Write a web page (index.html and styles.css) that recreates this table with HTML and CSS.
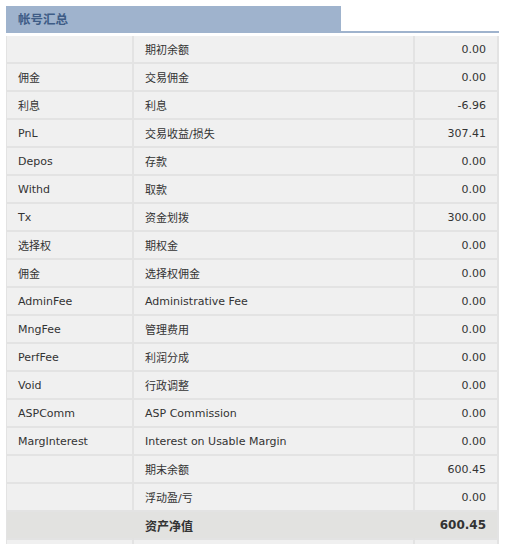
FILE: index.html
```html
<!DOCTYPE html>
<html>
<head>
<meta charset="utf-8">
<link rel="stylesheet" href="styles.css">
</head>
<body>
<div class="panel">
  <div class="tabbar"><div class="tab">帐号汇总</div></div>
  <table class="summary">
    <colgroup><col class="c1"><col class="c2"><col class="c3"></colgroup>
    <tr><td></td><td>期初余额</td><td class="num">0.00</td></tr>
    <tr><td>佣金</td><td>交易佣金</td><td class="num">0.00</td></tr>
    <tr><td>利息</td><td>利息</td><td class="num">-6.96</td></tr>
    <tr><td>PnL</td><td>交易收益/损失</td><td class="num">307.41</td></tr>
    <tr><td>Depos</td><td>存款</td><td class="num">0.00</td></tr>
    <tr><td>Withd</td><td>取款</td><td class="num">0.00</td></tr>
    <tr><td>Tx</td><td>资金划拨</td><td class="num">300.00</td></tr>
    <tr><td>选择权</td><td>期权金</td><td class="num">0.00</td></tr>
    <tr><td>佣金</td><td>选择权佣金</td><td class="num">0.00</td></tr>
    <tr><td>AdminFee</td><td>Administrative Fee</td><td class="num">0.00</td></tr>
    <tr><td>MngFee</td><td>管理费用</td><td class="num">0.00</td></tr>
    <tr><td>PerfFee</td><td>利润分成</td><td class="num">0.00</td></tr>
    <tr><td>Void</td><td>行政调整</td><td class="num">0.00</td></tr>
    <tr><td>ASPComm</td><td>ASP Commission</td><td class="num">0.00</td></tr>
    <tr><td>MargInterest</td><td>Interest on Usable Margin</td><td class="num">0.00</td></tr>
    <tr><td></td><td>期末余额</td><td class="num">600.45</td></tr>
    <tr><td></td><td>浮动盈/亏</td><td class="num">0.00</td></tr>
    <tr class="total"><td></td><td>资产净值</td><td class="num">600.45</td></tr>
    <tr><td></td><td></td><td class="num"></td></tr>
  </table>
</div>
</body>
</html>
```

FILE: styles.css
```css
html, body {
  margin: 0;
  padding: 0;
  background: #ffffff;
}
body {
  padding: 6px 0 0 6px;
  font-family: "DejaVu Sans", Verdana, "Noto Sans CJK SC", sans-serif;
  font-size: 11px;
  color: #333333;
}
.panel {
  width: 493px;
}
.tabbar {
  border-bottom: 2px solid #9fb3cd;
  display: flex;
}
.tab {
  width: 335px;
  height: 25px;
  background: #9fb3cd;
  color: #3e5c86;
  font-family: "Noto Sans CJK SC", sans-serif;
  font-weight: bold;
  font-size: 12.5px;
  line-height: 25px;
  padding-left: 12px;
  box-sizing: border-box;
}
.summary {
  margin-top: 3px;
  width: 493px;
  border-collapse: separate;
  border-spacing: 0;
  table-layout: fixed;
}
.c1 { width: 128px; }
.c2 { width: 281px; }
.c3 { width: 84px; }
.summary td {
  background: #f0f0f0;
  height: 28px;
  padding: 0 11px;
  border-right: 2px solid #e3e3e3;
  border-bottom: 2px solid #e3e3e3;
  font-family: "DejaVu Sans", "Noto Sans CJK SC", sans-serif;
  font-size: 11px;
  white-space: nowrap;
  overflow: hidden;
  box-sizing: border-box;
  vertical-align: middle;
}
.summary td:first-child {
  border-left: 1px solid #e3e3e3;
}
.summary td.num {
  text-align: right;
}
.summary tr.total td {
  background: #e2e2e0;
  border-right-color: #e2e2e0;
  font-weight: bold;
  font-size: 12px;
}
.summary tr.total td:last-child {
  border-right-color: #e3e3e3;
}
```
